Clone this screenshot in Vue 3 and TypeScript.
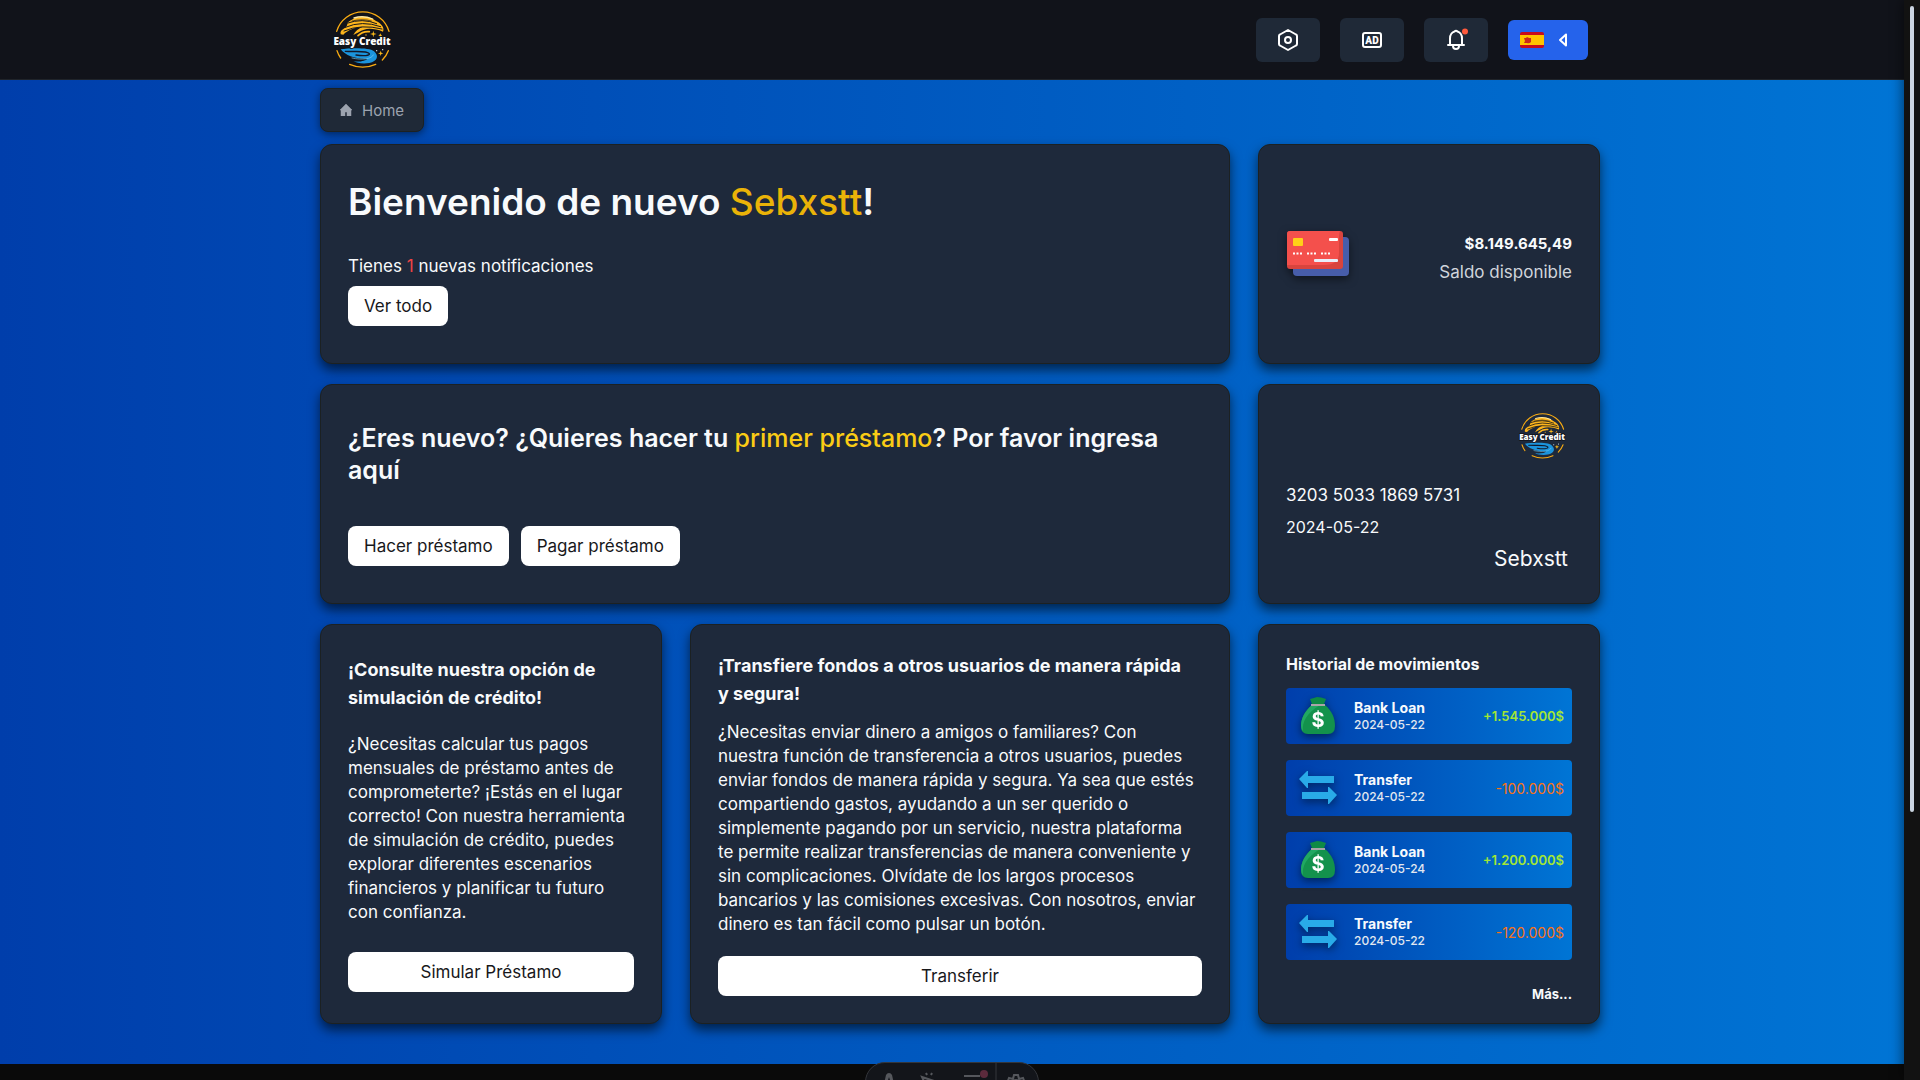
<script setup lang="ts">
import { defineComponent, h } from 'vue'

interface Movement {
  kind: 'income' | 'outcome'
  title: string
  date: string
  amount: string
}

const movements: Movement[] = [
  { kind: 'income', title: 'Bank Loan', date: '2024-05-22', amount: '+1.545.000$' },
  { kind: 'outcome', title: 'Transfer', date: '2024-05-22', amount: '-100.000$' },
  { kind: 'income', title: 'Bank Loan', date: '2024-05-24', amount: '+1.200.000$' },
  { kind: 'outcome', title: 'Transfer', date: '2024-05-22', amount: '-120.000$' },
]

const line = (d: string, stroke: string, width: number) =>
  h('path', { d, stroke, 'stroke-width': width, fill: 'none', 'stroke-linecap': 'round' })

const star = (x: number, y: number, r: number) =>
  h('path', {
    d: `M${x} ${y - r}L${x + 2} ${y - 2}L${x + r} ${y}L${x + 2} ${y + 2}L${x} ${y + r}L${x - 2} ${y + 2}L${x - r} ${y}L${x - 2} ${y - 2}Z`,
    fill: '#fbb91a',
  })

// Brand mark: golden hill over a blue river, the name across the middle
const BrandLogo = defineComponent({
  props: { width: { type: Number, required: true } },
  setup: (props) => () =>
    h('svg', { width: props.width, viewBox: '0 0 180 174', role: 'img', 'aria-label': 'Easy Credit', style: 'display:block' }, [
      line('M14 61A82 82 0 0 1 171 61', '#f8ab12', 4),
      line('M15 119Q19 132 26 141', '#f8ab12', 4),
      line('M169 119Q163 135 151 147', '#f8ab12', 4),
      line('M53 160Q92 177 131 160', '#f8ab12', 4),
      h('path', { d: 'M26 70C22 52 48 54 46 36C70 12 112 12 132 30C150 38 158 52 153 62C132 54 112 51 96 56C84 60 76 66 64 72C70 60 80 52 92 48C70 48 46 58 34 71Z', fill: '#fdb51c' }),
      line('M66 21Q94 12 122 24', '#ffe9a0', 4),
      line('M44 37Q92 20 134 38', '#151719', 3),
      line('M40 49Q90 27 146 47', '#151719', 3),
      line('M36 60Q88 38 150 54', '#151719', 3),
      line('M60 30Q92 22 118 30', '#151719', 2),
      line('M78 74Q92 60 112 62', '#fdb51c', 5),
      star(124, 69, 10),
      star(145, 73, 6),
      star(146, 127, 8),
      h('circle', { cx: 102, cy: 72, r: 2, fill: '#fbb91a' }),
      h('circle', { cx: 134, cy: 119, r: 2, fill: '#e8f3fa' }),
      h('circle', { cx: 152, cy: 116, r: 2, fill: '#e8f3fa' }),
      h('path', { d: 'M26 115C52 111 112 109 126 121C142 135 136 151 112 156C92 159 74 156 64 151C86 153 102 149 106 143C72 145 42 135 26 115Z', fill: '#1b94dc' }),
      line('M40 121C72 123 106 118 112 128C114 134 96 136 72 132', '#12182a', 4),
      line('M60 141C90 148 120 144 124 132', '#7ccdf5', 2),
      h('text', { x: 90, y: 103, 'text-anchor': 'middle', 'font-family': '"Open Sans", sans-serif', 'font-weight': 800, 'font-size': 30, fill: '#ffffff', stroke: '#101319', 'stroke-width': 5, 'paint-order': 'stroke' }, 'Easy Credit'),
    ]),
})
</script>

<template>
  <div class="page">
    <header class="navbar">
      <div class="shell navbar-inner">
        <a class="brand" href="#"><BrandLogo :width="60" /></a>
        <nav class="actions">
          <button class="icon-button" type="button" aria-label="Configuración">
            <svg width="24" height="24" viewBox="0 0 24 24" fill="none" stroke="#fff" stroke-width="2" stroke-linejoin="round">
              <path d="M12 2L20 6.500Q21 7 21 8V16Q21 17 20 17.500L12 22L4 17.500Q3 17 3 16V8Q3 7 4 6.500Z" />
              <circle cx="12" cy="12" r="3" />
            </svg>
          </button>
          <button class="icon-button" type="button" aria-label="Anuncios">
            <svg width="24" height="24" viewBox="0 0 24 24" fill="none">
              <rect x="3" y="5" width="18" height="14" rx="2" stroke="#fff" stroke-width="2" />
              <text x="12" y="16" text-anchor="middle" font-family="Roboto, sans-serif" font-weight="900" font-size="10" fill="#fff">AD</text>
            </svg>
          </button>
          <button class="icon-button" type="button" aria-label="Notificaciones">
            <svg width="24" height="24" viewBox="0 0 24 24" fill="none" stroke="#fff" stroke-width="2" stroke-linecap="round" stroke-linejoin="round">
              <path d="M4 17H20M6 17V10.500C6 6.500 8.500 4 10.500 3.500Q12 2 13.500 3.500C15.500 4 18 6.500 18 10.500V17" />
              <path d="M9 18Q9 21 12 21Q15 21 15 18" />
              <circle cx="21" cy="3.500" r="3" fill="#ff5a3c" stroke="none" />
            </svg>
          </button>
          <button class="language" type="button" aria-label="Idioma: español">
            <svg width="24" height="16" viewBox="0 0 24 16">
              <rect width="24" height="16" rx="2" fill="#c60b1e" />
              <rect y="3" width="24" height="10" fill="#ffc400" />
              <path d="M4 6L6 6L7 5L9 6L11 6V10Q9 12 7 11H4L5 9Z" fill="#c8281e" />
            </svg>
            <svg width="10" height="16" viewBox="0 0 10 16" fill="none" stroke="#fff" stroke-width="2" stroke-linejoin="round">
              <path d="M8 2.500V13.500L2 8Z" />
            </svg>
          </button>
        </nav>
      </div>
    </header>

    <main class="main">
      <div class="shell">
        <nav class="breadcrumb" aria-label="Ruta">
          <a href="#">
            <svg width="12" height="12" viewBox="0 0 12 12" fill="#9ca3af"><path d="M6 0L12 6H11V12H7V8H5V12H1V6H0Z" stroke="#9ca3af" stroke-width=".5" stroke-linejoin="round" /></svg>
            Home
          </a>
        </nav>

        <div class="grid">
          <section class="card welcome wide">
            <h1>Bienvenido de nuevo <span class="name">Sebxstt</span>!</h1>
            <p class="notice">Tienes <span class="count">1</span> nuevas notificaciones</p>
            <button class="button" type="button">Ver todo</button>
          </section>

          <section class="card balance">
            <svg class="lifted" width="64" height="46" viewBox="0 0 64 46">
              <rect x="7" y="6" width="56" height="39" rx="4" fill="#475daa" />
              <rect x="1" y="0" width="56" height="38" rx="3" fill="#d8443e" />
              <path d="M4 0H54Q53 2 53 8V22Q53 34 38 34H1V3Q1 0 4 0Z" fill="#f4504c" />
              <rect x="7" y="7" width="10" height="8" rx="1" fill="#ffd018" />
              <rect x="43" y="7" width="9" height="3" rx="1" fill="#fff" />
              <rect x="28" y="28" width="24" height="3" rx="1" fill="#e8eef8" />
              <path d="M7 22.500H16M21 22.500H30M35 22.500H44" stroke="#fff" stroke-width="2" stroke-dasharray="2 1.500" />
            </svg>
            <div class="balance-text">
              <strong>$8.149.645,49</strong>
              <span>Saldo disponible</span>
            </div>
          </section>

          <section class="card first-loan wide">
            <h2>¿Eres nuevo? ¿Quieres hacer tu <span class="highlight">primer préstamo</span>? Por favor ingresa <br />aquí</h2>
            <div class="row">
              <button class="button" type="button">Hacer préstamo</button>
              <button class="button" type="button">Pagar préstamo</button>
            </div>
          </section>

          <section class="card bank-card">
            <BrandLogo :width="48" />
            <p class="number">3203 5033 1869 5731</p>
            <p class="expiry">2024-05-22</p>
            <p class="holder">Sebxstt</p>
          </section>

          <section class="card simulate">
            <h3>¡Consulte nuestra opción de simulación de crédito!</h3>
            <p>
              ¿Necesitas calcular tus pagos mensuales de préstamo antes de comprometerte? ¡Estás en el lugar correcto! Con
              nuestra herramienta de simulación de crédito, puedes explorar diferentes escenarios financieros y planificar
              tu futuro con confianza.
            </p>
            <button class="button" type="button">Simular Préstamo</button>
          </section>

          <section class="card send">
            <h3>¡Transfiere fondos a otros usuarios de manera rápida <br />y segura!</h3>
            <p>
              ¿Necesitas enviar dinero a amigos o familiares? Con <br />nuestra función de transferencia a otros usuarios,
              puedes <br />enviar fondos de manera rápida y segura. Ya sea que estés <br />compartiendo gastos, ayudando a
              un ser querido o <br />simplemente pagando por un servicio, nuestra plataforma <br />te permite realizar
              transferencias de manera conveniente y <br />sin complicaciones. Olvídate de los largos procesos
              <br />bancarios y las comisiones excesivas. Con nosotros, enviar <br />dinero es tan fácil como pulsar un
              botón.
            </p>
            <button class="button" type="button">Transferir</button>
          </section>

          <section class="card history">
            <h4>Historial de movimientos</h4>
            <ul>
              <li v-for="(item, index) in movements" :key="index">
                <svg v-if="item.kind === 'income'" class="lifted" width="40" height="40" viewBox="0 0 40 40">
                  <path d="M14 9H27C34 15 37 22 37 30Q37 38 30 38H10Q3 38 3 30C3 22 7 15 14 9Z" fill="#13924c" />
                  <path d="M14 9H22C8 18 4 26 5 35Q3 33 3 30C3 22 7 15 14 9Z" fill="#21a862" />
                  <path d="M12 3Q16 2 19 1Q23 1 28 3L26 8H14Z" fill="#0f8a45" />
                  <rect x="13" y="8" width="14" height="2" fill="#a9a4a8" />
                  <text x="20" y="31" text-anchor="middle" font-family="Inter, sans-serif" font-weight="700" font-size="20" fill="#fff">$</text>
                </svg>
                <svg v-else class="lifted" width="40" height="40" viewBox="0 0 40 40" fill="#29abe8">
                  <path d="M1 11L9 3H10V8H36V15H10V20H9Z" />
                  <path d="M39 27L31 19H30V24H4V31H30V36H31Z" />
                </svg>
                <div class="movement">
                  <strong>{{ item.title }}</strong>
                  <span>{{ item.date }}</span>
                </div>
                <span class="amount" :class="item.kind">{{ item.amount }}</span>
              </li>
            </ul>
            <a class="more" href="#">Más...</a>
          </section>
        </div>
      </div>
    </main>

    <div class="scroll-track"><div class="scroll-thumb"></div></div>

    <div class="dev-toolbar">
      <svg width="172" height="40" viewBox="0 0 172 40" fill="none" stroke="#55575c" stroke-width="2">
        <path d="M16 30L20 12Q21 10 23 10Q25 10 26 12L30 30Z" fill="#55575c" stroke="none" />
        <path d="M23 14L21 20H25Z" fill="#13151a" stroke="none" />
        <path d="M56 14L71 19L64 21L62 27ZM61 12L60 10M65 12L66 10" />
        <path d="M98 13H114M98 20H114" />
        <circle cx="118" cy="11" r="4" fill="#5c2a3c" stroke="none" />
        <path d="M130 0V40" stroke="#34363b" stroke-width="1" />
        <path d="M141 20L143 15L147 16L148 12H152L153 16L157 15L159 20L156 24H144Z" />
        <circle cx="150" cy="20" r="3" />
      </svg>
    </div>
  </div>
</template>

<style>
body {
  margin: 0;
  background: #0a0a0a;
}
</style>

<style scoped>
.page {
  font-family: Inter, "Open Sans", sans-serif;
  color: #f8fafc;
}

.page * {
  box-sizing: border-box;
}

h1, h2, h3, h4, p, ul {
  margin: 0;
  padding: 0;
}

button {
  font: inherit;
  border: 0;
  cursor: pointer;
}

a {
  color: inherit;
  text-decoration: none;
}

.shell {
  max-width: 1280px;
  margin: 0 auto;
}

.navbar {
  background: #11131a;
  border-bottom: 1px solid #20242a;
}

.navbar-inner {
  display: flex;
  align-items: center;
  justify-content: space-between;
  height: 79px;
  padding: 0 12px;
}

.actions {
  display: flex;
  align-items: center;
  gap: 20px;
}

.icon-button {
  display: flex;
  align-items: center;
  justify-content: center;
  width: 64px;
  height: 44px;
  padding: 0;
  border-radius: 6px;
  background: #1f2937;
}

.icon-button svg {
  overflow: visible;
}

.language {
  display: flex;
  align-items: center;
  justify-content: space-between;
  width: 80px;
  height: 40px;
  padding: 0 20px 0 12px;
  border-radius: 6px;
  background: #2563eb;
}

.main {
  padding: 8px 0 40px;
  background: linear-gradient(to right, #003eab, #0075d5);
}

.breadcrumb {
  display: flex;
  margin-bottom: 12px;
}

.breadcrumb a {
  display: flex;
  align-items: center;
  gap: 10px;
  height: 44px;
  padding: 0 19px;
  border: 1px solid #1c2122;
  border-radius: 8px;
  background: #1f2937;
  box-shadow: 0 2px 8px rgba(0, 0, 0, 0.5);
  color: #9ca3af;
  font-size: 15px;
}

.grid {
  display: grid;
  grid-template-columns: 342fr 540fr 342fr;
  gap: 20px 28px;
}

.wide {
  grid-column: span 2;
}

.card {
  display: flex;
  flex-direction: column;
  justify-content: center;
  min-height: 220px;
  padding: 0 27px;
  border: 1px solid #1c2122;
  border-radius: 12px;
  background: #1e293b;
  box-shadow: 0 6px 12px rgba(0, 0, 0, 0.6);
}

.button {
  height: 40px;
  padding: 0 16px;
  border-radius: 8px;
  background: #fff;
  color: #18181b;
  font-size: 17px;
}

.welcome {
  align-items: flex-start;
}

.welcome h1 {
  margin-bottom: 32px;
  font-size: 37px;
  font-weight: 600;
  line-height: 40px;
}

.name {
  color: #eab308;
  font-weight: 500;
}

.notice {
  margin-bottom: 8px;
  font-size: 17px;
  line-height: 24px;
}

.count {
  color: #ef4444;
}

.balance {
  flex-direction: row;
  align-items: center;
  justify-content: space-between;
}

.lifted {
  flex: none;
  filter: drop-shadow(0 3px 4px rgba(0, 0, 0, 0.5));
}

.balance-text {
  display: flex;
  flex-direction: column;
  align-items: flex-end;
  padding-top: 8px;
  font-size: 15px;
  line-height: 28px;
}

.balance-text span {
  color: #d1d5db;
  font-size: 17px;
}

.first-loan h2 {
  margin-bottom: 40px;
  font-size: 25px;
  font-weight: 600;
  line-height: 32px;
}

.highlight {
  color: #facc15;
  font-weight: 500;
}

.row {
  display: flex;
  gap: 12px;
}

.bank-card svg {
  align-self: flex-end;
  margin-right: 6px;
}

.number {
  margin-top: 20px;
  font-size: 17px;
  line-height: 32px;
}

.expiry {
  font-size: 16px;
  line-height: 32px;
}

.holder {
  align-self: flex-end;
  padding-right: 4px;
  font-size: 21px;
  line-height: 32px;
}

.simulate,
.send {
  min-height: 400px;
  font-size: 17px;
  line-height: 24px;
}

.card h3 {
  font-size: 18px;
  font-weight: 700;
  line-height: 28px;
}

.simulate p {
  margin: 20px 0 28px;
}

.send p {
  margin: 12px 0 20px;
}

.history {
  justify-content: flex-start;
  padding: 27px 27px 19px;
}

.history h4 {
  margin-bottom: 12px;
  font-size: 16px;
  font-weight: 700;
  line-height: 24px;
}

.history ul {
  display: flex;
  flex-direction: column;
  gap: 16px;
  list-style: none;
}

.history li {
  display: flex;
  align-items: center;
  height: 56px;
  padding: 0 8px 0 12px;
  border-radius: 4px;
  background: linear-gradient(to right, #003eab, #0075d5);
}

.movement {
  display: flex;
  flex: 1;
  flex-direction: column;
  margin-left: 16px;
  font-size: 14px;
  line-height: 18px;
}

.movement span {
  color: #e2e8f0;
  font-size: 12px;
  font-weight: 500;
  line-height: 16px;
}

.income {
  color: #a3e635;
  font-size: 13px;
  font-weight: 600;
}

.outcome {
  color: #f97316;
  font-size: 14px;
}

.more {
  align-self: flex-end;
  margin-top: 24px;
  font-size: 13px;
  font-weight: 700;
  line-height: 20px;
}

.scroll-track {
  position: fixed;
  top: 0;
  right: 0;
  bottom: 0;
  width: 16px;
  padding: 6px 6px 0;
  background: #121212;
  box-shadow: 0 0 14px rgba(0, 0, 0, 0.6);
}

.scroll-thumb {
  width: 4px;
  height: 75%;
  border-radius: 2px;
  background: #cbd5e1;
}

.dev-toolbar {
  position: fixed;
  bottom: -22px;
  left: 50%;
  margin-left: -95px;
  height: 40px;
  border: 1px solid #34363b;
  border-radius: 20px;
  background: #13151a;
  overflow: hidden;
}
</style>
